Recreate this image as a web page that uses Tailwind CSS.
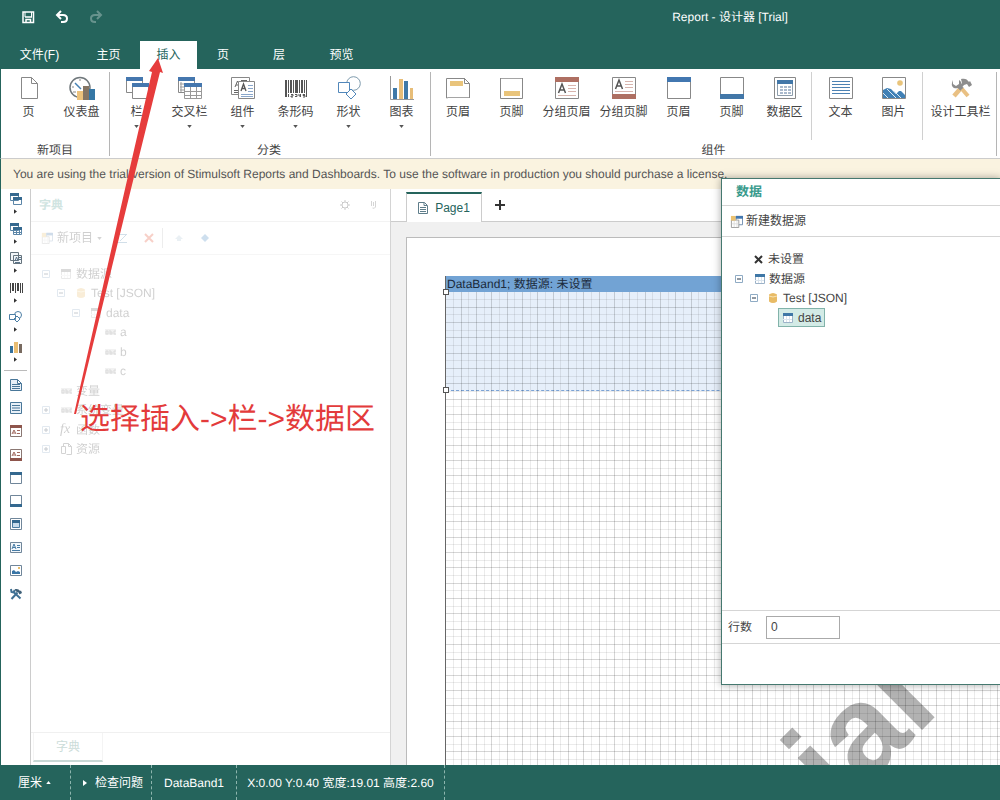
<!DOCTYPE html>
<html lang="zh-CN">
<head>
<meta charset="utf-8">
<title>Report - 设计器 [Trial]</title>
<script src="https://cdn.jsdelivr.net/npm/@tailwindcss/browser@4"></script>
</head>
<body class="font-['Liberation_Sans','Noto_Sans_CJK_SC',sans-serif] text-xs text-[#444] [text-rendering:geometricPrecision]">
<svg class="hidden" aria-hidden="true">
  <symbol id="page" viewBox="0 0 24 24"><path d="M4.500 1.500h10l6 6v15h-16zM14.500 1.500v6h6" fill="#fff" stroke="#888"/></symbol>
  <symbol id="gauge" viewBox="0 0 28 24"><circle cx="12" cy="11.500" r="10" fill="#fff" stroke="#70787c" stroke-width="1.500"/><path d="M7 7l6 6" stroke="#4682b4" stroke-width="1.500"/><path d="M9 15h6v9H9z" fill="#ecc27c"/><path d="M15 10h6v14h-6z" fill="#857564"/><path d="M21 13h6v11h-6z" fill="#3577a5"/><path d="M5 16h3M12 3v2M4 11h2" stroke="#888"/></symbol>
  <symbol id="bands" viewBox="0 0 24 24"><path d="M1.500 1.500h16v15h-16z" fill="#fff" stroke="#888"/><path d="M1 1h17v4H1z" fill="#4577ae"/><path d="M7.500 7.500h16v15h-16z" fill="#fff" stroke="#888"/><path d="M7 7h17v4H7z" fill="#4577ae"/></symbol>
  <symbol id="cross" viewBox="0 0 24 24"><path d="M.5 1.500h16v15H.5z" fill="#fff" stroke="#888"/><path d="M0 1h17v4H0z" fill="#4577ae"/><path d="M2 8h4M2 11h4M2 14h4M3 6v10" stroke="#999"/><path d="M6.500 7.500h17v15h-17z" fill="#fff" stroke="#999"/><path d="M6 7h18v4H6z" fill="#4577ae"/><path d="M12.500 11v11M18.500 11v11M6 15.500h17M6 19.500h17" fill="none" stroke="#999"/></symbol>
  <symbol id="comp" viewBox="0 0 24 24"><path d="M.5 1.500h18v17H.5z" fill="#fff" stroke="#888"/><path d="M4 11l2.500-6L8 8M5 9h3M10 4.500h6M3 14.500h4M3 16.500h4" fill="none" stroke="#666"/><path d="M7.500 5.500h16v17h-16z" fill="#fff" stroke="#888"/><path d="M10 15l2.500-7L15 15M11 12.500h3" fill="none" stroke="#555" stroke-width="1.300"/><path d="M17 9.500h5M17 12.500h5M17 15.500h5M10 18.500h12M10 20.500h12" stroke="#8aa7cb"/></symbol>
  <symbol id="barcode" viewBox="0 0 24 24"><path d="M1 4h2v17H1zM4 4h1v13H4zM6 4h2v13H6zM9 4h1v13H9zM11 4h3v13h-3zM15 4h1v13h-1zM17 4h2v13h-2zM20 4h1v13h-1zM22 4h1v17h-1z" fill="#555"/><path d="M4.500 18v3M7 18.500h2v1.500H7V21h2M11 18.500h2v2h-2M15 18v2h2M16.500 18v3M21 18.500h-2v1h2V21h-2" fill="none" stroke="#555"/></symbol>
  <symbol id="shapes" viewBox="0 0 24 24"><circle cx="16.500" cy="7.500" r="6.800" fill="#fff" stroke="#7d9aac"/><path d="M1.500 6.500h11v10h-11z" fill="#fff" stroke="#5187ba"/><path d="M14 13l5 5-5 5-5-5z" fill="#fff" stroke="#5187ba"/></symbol>
  <symbol id="chart" viewBox="0 0 24 24"><path d="M.5 0v23.500H24" fill="none" stroke="#999"/><path d="M3 12h4v11H3zM14 5h4v18h-4z" fill="#3f78a7"/><path d="M9 3h4v20H9zM20 12h3v11h-3z" fill="#e7bd78"/></symbol>
  <symbol id="phead" viewBox="0 0 24 24"><path d="M.5 22V2.500h18l5 5V22l-1-1-1 1-1-1-1 1-1-1-1 1-1-1-1 1-1-1-1 1-1-1-1 1-1-1-1 1-1-1-1 1-1-1-1 1-1-1-1 1-1-1-1 1zM18.500 2v5.500h5" fill="#fff" stroke="#888"/><path d="M4 5h13v5H4z" fill="#e9c47b"/></symbol>
  <symbol id="pfoot" viewBox="0 0 24 24"><path d="M.5 2l1 1 1-1 1 1 1-1 1 1 1-1 1 1 1-1 1 1 1-1 1 1 1-1 1 1 1-1 1 1 1-1 1 1 1-1 1 1 1-1 1 1 1-1v20.500H.5z" fill="#fff" stroke="#888"/><path d="M4 15h16v5H4z" fill="#e9c47b"/></symbol>
  <symbol id="ghead" viewBox="0 0 24 24"><path d="M.5 1.500h23v21H.5z" fill="#fff" stroke="#888"/><path d="M0 1h24v5H0z" fill="#ae6f62"/><path d="M3.500 17l3.500-9 3.500 9M5 14h4" fill="none" stroke="#555" stroke-width="1.500"/><path d="M13 9.500h8M13 12.500h8M13 15.500h8M3 19.500h18" stroke="#d8b5ae"/></symbol>
  <symbol id="gfoot" viewBox="0 0 24 24"><path d="M.5 1.500h23v21H.5z" fill="#fff" stroke="#888"/><path d="M0 18h24v5H0z" fill="#ae6f62"/><path d="M3.500 13L7 4l3.500 9M5 10h4" fill="none" stroke="#555" stroke-width="1.500"/><path d="M13 5.500h8M13 8.500h8M13 11.500h8M3 15.500h18" stroke="#d8b5ae"/></symbol>
  <symbol id="head" viewBox="0 0 24 24"><path d="M.5 1.500h23v21H.5z" fill="#fff" stroke="#888"/><path d="M0 1h24v5H0z" fill="#4277b0"/></symbol>
  <symbol id="foot" viewBox="0 0 24 24"><path d="M.5 1.500h23v21H.5z" fill="#fff" stroke="#888"/><path d="M0 18h24v5H0z" fill="#4277a8"/></symbol>
  <symbol id="data" viewBox="0 0 24 24"><path d="M1.500 1.500h21v21h-21z" fill="#fff" stroke="#888"/><path d="M4.500 4.500h15v15h-15z" fill="#fff" stroke="#8d9dab"/><path d="M4 4h16v4H4z" fill="#4277a8"/><path d="M7 11h3M11 11h3M15 11h3M7 14h3M11 14h3M15 14h3M7 17h3M11 17h3M15 17h3" stroke="#8fa4bd" stroke-width="1.500"/></symbol>
  <symbol id="text" viewBox="0 0 24 24"><path d="M.5 1.500h23v21H.5z" fill="#fff" stroke="#888"/><path d="M3 5.500h18M3 8.500h18M3 11.500h18M3 14.500h18M3 17.500h18" stroke="#4d82b3"/></symbol>
  <symbol id="image" viewBox="0 0 24 24"><path d="M.5 1.500h23v21H.5z" fill="#fff" stroke="#888"/><circle cx="18" cy="7" r="2.800" fill="#e9c47b"/><path d="M1 14l4-2 4 1 5 5 3-3h2l4 4v3H1z" fill="#4080b5"/><path d="M5 13l9 9M12 15l7 7M1 17l5 5" stroke="#dceaf5"/></symbol>
  <symbol id="tools" viewBox="0 0 24 24"><path d="M12 12l-7 8" stroke="#e9c083" stroke-width="4.500"/><path d="M4 4v4l3 2 3-2V4c2 1 3 3 2 6l3 2-3 3-3-3c-4 1-7-1-6-5z" fill="#8d8d8d"/><path d="M12 3c4-1 6 0 8 3l1-1 2 4-3 2-2-3-3 1-4 5-2-2 4-5z" fill="#8d8d8d"/><path d="M13 13l6 7" stroke="#e9c083" stroke-width="4"/></symbol>
  <symbol id="tools2" viewBox="0 0 24 24"><path d="M21 21L6 7M2 2l1 6 5 1 1-5M3 22L15 9" fill="none" stroke="#3f7094" stroke-width="4"/><path d="M9 3c5-2 9 0 11 3l2-1 2 5-5 3-2-4-5-2z" fill="#3f6078"/></symbol>
  <symbol id="table" viewBox="0 0 12 12"><path d="M1.500 1.500h9v9h-9z" fill="#fff" stroke="#9cb2c8"/><path d="M4.500 4v6M7.500 4v6M1 7.500h9" stroke="#dbe5ee"/><path d="M1 1h10v3H1z" fill="#3f77a6"/></symbol>
  <symbol id="db" viewBox="0 0 12 12"><path d="M2 2.500q4-3 8 0v7q-4 3-8 0z" fill="#e8bb66"/><path d="M2 4q4 2 8 0" fill="none" stroke="#f9e3b4"/></symbol>
  <symbol id="minus" viewBox="0 0 8 8"><path d="M.5.5h7v7h-7z" fill="#fff" stroke="#8fabc4"/><path d="M2 4h4" stroke="#234"/></symbol>
  <symbol id="plus" viewBox="0 0 8 8"><path d="M.5.5h7v7h-7z" fill="#fff" stroke="#8fabc4"/><path d="M2 4h4M4 2v4" stroke="#234"/></symbol>
  <symbol id="abc" viewBox="0 0 13 12"><path d="M1 3h11v6H1z" fill="#ccc"/><path d="M2 8V5h2v3H2M6 4v4h2V6H6M12 5h-2v3h2" fill="none" stroke="#777"/></symbol>
  <symbol id="newds" viewBox="0 0 14 14"><path d="M6.500 1.500h7v9h-7z" fill="#fff" stroke="#6d8db0"/><path d="M6 1h8v3H6z" fill="#4277b0"/><path d="M1.500 5.500h8v8h-8z" fill="#fff" stroke="#999"/><path d="M4.500 6v7M7.500 6v7M2 9.500h7" stroke="#ddd"/><path d="M1 1h5v5H1z" fill="#ebc16f"/></symbol>
  <symbol id="down" viewBox="0 0 6 4"><path d="M0 0h6L3 4z" fill="#555"/></symbol>
  <symbol id="right" viewBox="0 0 4 6"><path d="M0 0v6l4-3z" fill="#333"/></symbol>
</svg>

<div class="relative flex h-screen flex-col overflow-hidden bg-white">
  <header class="shrink-0 bg-[#25645c] text-white">
    <div class="flex h-[34px] items-center">
      <div class="flex w-[46%] items-center gap-5 pl-[21px]">
        <button aria-label="保存"><svg class="size-[14px]" viewBox="0 0 14 14"><path d="M2 2h10.500v10.500H2zM4 7h7M5 12V9.500h4.500V12" fill="none" stroke="#fff" stroke-width="1.500"/><path d="M4 2v5M10.500 2v5" stroke="#fff"/></svg></button>
        <button aria-label="撤销"><svg class="size-[14px]" viewBox="0 0 14 14"><path d="M6 1L2 5l4 4M2 5h6q4 0 4 3.500T8 12H6" fill="none" stroke="#fff" stroke-width="2"/></svg></button>
        <button aria-label="重做" class="opacity-30"><svg class="size-[14px]" viewBox="0 0 14 14"><path d="M8 1l4 4-4 4M12 5H6q-4 0-4 3.500T6 12h1" fill="none" stroke="#fff" stroke-width="2"/></svg></button>
      </div>
      <h1 class="flex-1 text-center">Report - 设计器 [Trial]</h1>
    </div>
    <nav class="flex h-[35px] items-end pl-[11px]">
      <button class="h-7 w-[57px]">文件(F)</button>
      <button class="ml-3 h-7 w-[57px]">主页</button>
      <button class="ml-[3px] h-7 w-[57px] bg-white text-[#25645c]">插入</button>
      <button class="h-7 w-[52px]">页</button>
      <button class="ml-1 h-7 w-[52px]">层</button>
      <button class="ml-2 h-7 w-[57px]">预览</button>
    </nav>
  </header>

  <section aria-label="插入" class="flex h-[90px] shrink-0 border-b border-l border-b-[#ccc] border-l-[#25645c] pt-[3px] pb-[2px] pl-px">
    <div class="flex shrink-0 flex-col justify-between border-r border-[#b5b5b5] pr-px">
      <div class="flex">
        <button class="flex w-[53px] flex-col items-center pt-1"><svg class="size-6"><use href="#page"/></svg><span class="mt-1">页</span></button>
        <button class="flex w-[53px] flex-col items-center pt-1"><svg class="h-6 w-7"><use href="#gauge"/></svg><span class="mt-1">仪表盘</span></button>
      </div>
      <div class="text-center leading-3">新项目</div>
    </div>
    <div class="flex shrink-0 flex-col justify-between border-r border-[#b5b5b5] pr-[2px]">
      <div class="flex">
        <button class="flex w-[53px] flex-col items-center pt-1"><svg class="size-6"><use href="#bands"/></svg><span class="mt-1">栏</span><svg class="mt-[5px] h-[3px] w-[5px]"><use href="#down"/></svg></button>
        <button class="flex w-[53px] flex-col items-center pt-1"><svg class="size-6"><use href="#cross"/></svg><span class="mt-1">交叉栏</span><svg class="mt-[5px] h-[3px] w-[5px]"><use href="#down"/></svg></button>
        <button class="flex w-[53px] flex-col items-center pt-1"><svg class="size-6"><use href="#comp"/></svg><span class="mt-1">组件</span><svg class="mt-[5px] h-[3px] w-[5px]"><use href="#down"/></svg></button>
        <button class="flex w-[53px] flex-col items-center pt-1"><svg class="size-6"><use href="#barcode"/></svg><span class="mt-1">条形码</span><svg class="mt-[5px] h-[3px] w-[5px]"><use href="#down"/></svg></button>
        <button class="flex w-[53px] flex-col items-center pt-1"><svg class="size-6"><use href="#shapes"/></svg><span class="mt-1">形状</span><svg class="mt-[5px] h-[3px] w-[5px]"><use href="#down"/></svg></button>
        <button class="flex w-[53px] flex-col items-center pt-1"><svg class="size-6"><use href="#chart"/></svg><span class="mt-1">图表</span><svg class="mt-[5px] h-[3px] w-[5px]"><use href="#down"/></svg></button>
      </div>
      <div class="text-center leading-3">分类</div>
    </div>
    <div class="flex shrink-0 flex-col justify-between border-r border-[#b5b5b5]">
      <div class="flex">
        <button class="flex w-[54px] flex-col items-center pt-1"><svg class="size-6"><use href="#phead"/></svg><span class="mt-1">页眉</span></button>
        <button class="flex w-[53px] flex-col items-center pt-1"><svg class="size-6"><use href="#pfoot"/></svg><span class="mt-1">页脚</span></button>
        <button class="flex w-[57px] flex-col items-center pt-1"><svg class="size-6"><use href="#ghead"/></svg><span class="mt-1">分组页眉</span></button>
        <button class="flex w-[57px] flex-col items-center pt-1"><svg class="size-6"><use href="#gfoot"/></svg><span class="mt-1">分组页脚</span></button>
        <button class="flex w-[53px] flex-col items-center pt-1"><svg class="size-6"><use href="#head"/></svg><span class="mt-1">页眉</span></button>
        <button class="flex w-[53px] flex-col items-center pt-1"><svg class="size-6"><use href="#foot"/></svg><span class="mt-1">页脚</span></button>
        <button class="flex w-[53px] flex-col items-center pt-1"><svg class="size-6"><use href="#data"/></svg><span class="mt-1">数据区</span></button>
        <div class="mr-[2px] h-[68px] border-l border-[#d0d0d0]"></div>
        <button class="flex w-[53px] flex-col items-center pt-1"><svg class="size-6"><use href="#text"/></svg><span class="mt-1">文本</span></button>
        <button class="flex w-[53px] flex-col items-center pt-1"><svg class="size-6"><use href="#image"/></svg><span class="mt-1">图片</span></button>
        <div class="mx-[2px] h-[68px] border-l border-[#d0d0d0]"></div>
        <button class="flex w-[71px] flex-col items-center pt-1"><svg class="size-6"><use href="#tools"/></svg><span class="mt-1">设计工具栏</span></button>
      </div>
      <div class="text-center leading-3">组件</div>
    </div>
  </section>

  <p class="flex h-[30px] shrink-0 items-center border-l border-l-[#25645c] bg-[#faf3e0] pl-3 text-[#555]">You are using the trial version of Stimulsoft Reports and Dashboards. To use the software in production you should purchase a license.</p>

  <main class="flex min-h-0 flex-1 border-l border-[#25645c]">
    <aside aria-label="工具箱" class="w-[30px] shrink-0 border-r border-[#ccc] pt-1">
      <div class="flex h-[177px] flex-col">
        <button aria-label="栏" class="flex flex-1 flex-col items-center gap-1"><svg class="size-3" viewBox="0 0 12 12"><path d="M.5.500h8v7h-8zM3.500 4.500h8v7h-8z" fill="#fff" stroke="#5c86a8"/><path d="M0 0h9v3H0zM3 4h9v3H3z" fill="#34688f"/></svg><svg class="h-[5px] w-[3px]"><use href="#right"/></svg></button>
        <button aria-label="交叉栏" class="flex flex-1 flex-col items-center gap-1"><svg class="size-3" viewBox="0 0 12 12"><path d="M.5.500h8v7h-8zM3.500 4.500h8v7h-8zM6.500 7v4M9.500 7v4M4 9.500h7" fill="#fff" stroke="#5c86a8"/><path d="M0 0h9v3H0zM3 4h9v3H3z" fill="#34688f"/></svg><svg class="h-[5px] w-[3px]"><use href="#right"/></svg></button>
        <button aria-label="组件" class="flex flex-1 flex-col items-center gap-1"><svg class="size-3" viewBox="0 0 12 12"><path d="M.5.500h8v8h-8zM3.500 3.500h8v8h-8z" fill="#f2f6f9" stroke="#66747e"/><path d="M5 9l1.500-4L8 9M9 5.500h2M9 7.500h2M5 10.500h5" fill="none" stroke="#5a7389"/></svg><svg class="h-[5px] w-[3px]"><use href="#right"/></svg></button>
        <button aria-label="条形码" class="flex flex-1 flex-col items-center gap-1"><svg class="h-3 w-[14px]" viewBox="0 0 14 12"><path d="M1 1h1v10H1zM3 1h2v8H3zM6 1h1v10H6zM8 1h2v8H8zM11 1h1v10h-1zM13 1h1v10h-1z" fill="#444"/></svg><svg class="h-[5px] w-[3px]"><use href="#right"/></svg></button>
        <button aria-label="形状" class="flex flex-1 flex-col items-center gap-1"><svg class="h-3 w-[13px]" viewBox="0 0 13 12"><circle cx="9" cy="4" r="3.500" fill="#fff" stroke="#4c7ea5"/><path d="M.5 3.500h6v5h-6zM8 5l3 3-3 3-3-3z" fill="#fff" stroke="#4c7ea5"/></svg><svg class="h-[5px] w-[3px]"><use href="#right"/></svg></button>
        <button aria-label="图表" class="flex flex-1 flex-col items-center gap-1"><svg class="size-3" viewBox="0 0 12 12"><path d="M0 5h3v7H0z" fill="#33709d"/><path d="M4 1h4v11H4z" fill="#e9bd72"/><path d="M9 3h3v9H9z" fill="#786a60"/></svg><svg class="h-[5px] w-[3px]"><use href="#right"/></svg></button>
      </div>
      <div class="mx-[3px] border-t border-[#bbb]"></div>
      <div class="mt-[2px] flex h-[233px] flex-col">
        <button aria-label="文档" class="flex flex-1 items-center justify-center"><svg class="size-3" viewBox="0 0 12 12"><path d="M.5.500h7l4 4v7H.5zM2 5.500h8M2 7.500h8M2 9.500h8M7.500.5v4h4" fill="#e8f0f8" stroke="#497799"/></svg></button>
        <button aria-label="文本" class="flex flex-1 items-center justify-center"><svg class="size-3" viewBox="0 0 12 12"><path d="M.5.500h11v11H.5zM2 3.500h8M2 6h8M2 8.500h8" fill="#e8f0f8" stroke="#497799"/></svg></button>
        <button aria-label="分组页眉" class="flex flex-1 items-center justify-center"><svg class="size-3" viewBox="0 0 12 12"><path d="M.5.500h11v11H.5z" fill="#fff" stroke="#8a7772"/><path d="M0 0h12v3H0z" fill="#8e554c"/><path d="M2 9l2-4 2 4M3 8h2M7 5.500h3M7 8.500h3" fill="none" stroke="#a1695e"/></svg></button>
        <button aria-label="分组页脚" class="flex flex-1 items-center justify-center"><svg class="size-3" viewBox="0 0 12 12"><path d="M.5.500h11v11H.5z" fill="#fff" stroke="#8a7772"/><path d="M0 9h12v3H0z" fill="#8e554c"/><path d="M2 7l2-4 2 4M3 6h2M7 3.500h3M7 6.500h3" fill="none" stroke="#a1695e"/></svg></button>
        <button aria-label="页眉" class="flex flex-1 items-center justify-center"><svg class="size-3" viewBox="0 0 12 12"><path d="M.5.500h11v11H.5z" fill="#fff" stroke="#70869a"/><path d="M0 0h12v3H0z" fill="#34688f"/></svg></button>
        <button aria-label="页脚" class="flex flex-1 items-center justify-center"><svg class="size-3" viewBox="0 0 12 12"><path d="M.5.500h11v11H.5z" fill="#fff" stroke="#70869a"/><path d="M0 9h12v3H0z" fill="#34688f"/></svg></button>
        <button aria-label="数据区" class="flex flex-1 items-center justify-center"><svg class="size-3" viewBox="0 0 12 12"><path d="M.5.500h11v11H.5z" fill="#fff" stroke="#70869a"/><path d="M2.500 3.500h7v6h-7z" fill="#c9dcec" stroke="#4b7da3"/><path d="M2 2h8v3H2z" fill="#34688f"/></svg></button>
        <button aria-label="富文本" class="flex flex-1 items-center justify-center"><svg class="size-3" viewBox="0 0 12 12"><path d="M.5.500h11v10H.5z" fill="#f2f7fb" stroke="#70869a"/><path d="M2 7l2-5 2 5M3 5.500h2M7 3.500h3M7 5.500h3M2 8.500h8" fill="none" stroke="#467ba5"/></svg></button>
        <button aria-label="图片" class="flex flex-1 items-center justify-center"><svg class="size-3" viewBox="0 0 12 12"><path d="M.5.500h11v10H.5z" fill="#fff" stroke="#70869a"/><path d="M2 9V6l2-1 2 2 2-1 2 1v2z" fill="#3875a6"/><path d="M8 2h2v2H8z" fill="#e7bb69"/></svg></button>
        <button aria-label="设计工具栏" class="flex flex-1 items-center justify-center"><svg class="size-3"><use href="#tools2"/></svg></button>
      </div>
    </aside>

    <section aria-label="字典" class="flex w-[360px] shrink-0 flex-col border-r border-[#d4d4d4]">
      <div class="flex h-[33px] items-center gap-[18px] border-b border-[#f3f3f3] pr-3 pl-2">
        <h2 class="flex-1 font-bold text-[#d0e4e1]">字典</h2>
        <button aria-label="设置"><svg class="size-[10px]" viewBox="0 0 10 10"><circle cx="5" cy="5" r="3" fill="none" stroke="#ccc"/><path d="M5 0v2M5 8v2M0 5h2M8 5h2M1.500 1.500l1.500 1.500M7 7l1.500 1.500M8.500 1.500L7 3M3 7L1.500 8.500" stroke="#ccc"/></svg></button>
        <button aria-label="固定"><svg class="size-[10px]" viewBox="0 0 10 10"><path d="M3.500 1v5M5.500 2v4M7.500 1v6q-1 2-3 1" fill="none" stroke="#d5d5d5"/></svg></button>
      </div>
      <div class="flex h-[33px] items-center border-b border-[#ddd] pl-[10px] opacity-25">
        <button class="flex items-center gap-1"><svg class="size-3"><use href="#newds"/></svg>新项目<svg class="h-[3px] w-[5px]"><use href="#down"/></svg></button>
        <button aria-label="编辑" class="ml-[15px]"><svg class="size-[11px]" viewBox="0 0 11 11"><path d="M1 1.500h9M1 9.500h9M3 8l6-6" fill="none" stroke="#4f84aa"/></svg></button>
        <button aria-label="删除" class="ml-4"><svg class="size-[10px]" viewBox="0 0 10 10"><path d="M1 1l8 8M9 1L1 9" stroke="#e24727" stroke-width="2"/></svg></button>
        <div class="ml-2 h-5 border-l border-[#bbb]"></div>
        <button aria-label="上移" class="ml-3"><svg class="size-2" viewBox="0 0 8 8"><path d="M4 1l4 4H6v2H2V5H0z" fill="#aec4d4"/></svg></button>
        <button aria-label="下移" class="ml-[18px]"><svg class="size-2" viewBox="0 0 8 8"><path d="M4 8l4-4-4-4-4 4z" fill="#3f82bf"/></svg></button>
      </div>
      <ul class="mt-[9px] flex h-[195px] flex-col pl-[11px] opacity-25">
        <li class="flex flex-1 items-center gap-1"><svg class="mr-[6px] size-2"><use href="#minus"/></svg><svg class="size-3 grayscale"><use href="#table"/></svg>数据源</li>
        <li class="ml-[15px] flex flex-1 items-center gap-1"><svg class="mr-[6px] size-2"><use href="#minus"/></svg><svg class="size-3"><use href="#db"/></svg>Test [JSON]</li>
        <li class="ml-[30px] flex flex-1 items-center gap-1"><svg class="mr-[6px] size-2"><use href="#minus"/></svg><svg class="size-3 grayscale"><use href="#table"/></svg>data</li>
        <li class="ml-[62px] flex flex-1 items-center gap-[3px]"><svg class="h-3 w-[13px]"><use href="#abc"/></svg>a</li>
        <li class="ml-[62px] flex flex-1 items-center gap-[3px]"><svg class="h-3 w-[13px]"><use href="#abc"/></svg>b</li>
        <li class="ml-[62px] flex flex-1 items-center gap-[3px]"><svg class="h-3 w-[13px]"><use href="#abc"/></svg>c</li>
        <li class="ml-[18px] flex flex-1 items-center gap-[3px]"><svg class="h-3 w-[13px]"><use href="#abc"/></svg>变量</li>
        <li class="flex flex-1 items-center gap-[3px]"><svg class="mr-[7px] size-2"><use href="#plus"/></svg><svg class="h-3 w-[13px]"><use href="#abc"/></svg>系统变量</li>
        <li class="flex flex-1 items-center gap-[3px]"><svg class="mr-[7px] size-2"><use href="#plus"/></svg><i class="w-[13px] font-['Liberation_Serif',serif] text-sm leading-none">fx</i>函数</li>
        <li class="flex flex-1 items-center gap-[3px]"><svg class="mr-[7px] size-2"><use href="#plus"/></svg><svg class="h-3 w-[13px]" viewBox="0 0 13 12"><path d="M3.500 3V.500h5l3 3v8h-5M1.500 3.500h4v7h-4zM8.500.500v3h3" fill="none" stroke="#555"/></svg>资源</li>
      </ul>
      <div class="mt-auto border-t border-[#f0f0f0] pl-[2px]">
        <button class="mb-[3px] h-[29px] w-[70px] border-x border-b-2 border-x-[#f4f4f4] border-b-[#c7d8d5] text-[#cbdcd9]">字典</button>
      </div>
    </section>

    <section aria-label="报表页面" class="flex min-w-0 flex-1 flex-col bg-[#f0f0f0]">
      <div class="flex h-[33px] shrink-0 items-end border-b border-[#ccc] bg-white pl-[15px]">
        <button class="-mb-px flex h-[30px] w-[76px] items-center justify-center gap-[7px] border-x border-t-2 border-x-[#ccc] border-t-[#25645c] bg-white text-[#25645c]"><svg class="h-3 w-[10px]" viewBox="0 0 10 12"><path d="M.5.500h6l3 3v8h-9zM6 .5v3h3M2 5.500h6M2 7.500h6M2 9.500h6" fill="none" stroke="#5e7d8a"/></svg>Page1</button>
        <button aria-label="添加页面" class="mb-[10px] ml-3"><svg class="size-3" viewBox="0 0 12 12"><path d="M6 1v10M1 6h10" stroke="#333" stroke-width="2"/></svg></button>
      </div>
      <div class="mt-[15px] ml-[15px] min-h-0 flex-1 overflow-hidden border-t border-l border-[#bbb] bg-white pt-[38px] pl-[38px]">
        <div class="relative h-full border-l border-[#666]">
          <div class="h-4 bg-[#72a3d4] pl-px leading-4 text-[#1c2b3c]">DataBand1; 数据源: 未设置</div>
          <div class="h-[99px] border-b border-dashed border-[#7ba2d4] bg-[#e6effa]"></div>
          <svg class="absolute inset-x-0 top-4 bottom-0 size-full" aria-hidden="true">
            <defs><pattern id="grid" width="46" height="46" patternUnits="userSpaceOnUse">
              <path d="M7.500 0v46M22.500 0v46M38.500 0v46M0 7.500h46M0 22.500h46M0 38.500h46" stroke="#000" stroke-opacity=".08"/>
              <path d="M15.500 0v46M30.500 0v46M45.500 0v46M0 15.500h46M0 30.500h46M0 45.500h46" stroke="#000" stroke-opacity=".16"/>
            </pattern></defs>
            <rect width="100%" height="100%" fill="url(#grid)"/>
            <text transform="translate(495 419) rotate(-45)" text-anchor="end" font-family="Liberation Sans, sans-serif" font-weight="700" font-size="129" fill="#000" fill-opacity=".3">Trial</text>
          </svg>
          <span class="absolute top-[13px] -left-[3px] size-[6px] border border-[#555] bg-white"></span>
          <span class="absolute top-[111px] -left-[3px] size-[6px] border border-[#555] bg-white"></span>
        </div>
      </div>
    </section>
  </main>

  <footer class="flex h-[35px] shrink-0 items-stretch bg-[#25645c] text-white">
    <button class="flex w-[71px] items-center gap-1 border-r border-dashed border-[#8db5ae] pl-[18px]">厘米<svg class="h-[3px] w-[5px]" viewBox="0 0 6 4"><path d="M0 4h6L3 0z" fill="#fff"/></svg></button>
    <button class="flex w-[81px] items-center gap-2 border-r border-dashed border-[#8db5ae] pl-3"><svg class="h-[6px] w-1" viewBox="0 0 4 6"><path d="M0 0v6l4-3z" fill="#fff"/></svg>检查问题</button>
    <div class="flex w-[85px] items-center justify-center border-r border-dashed border-[#8db5ae]">DataBand1</div>
    <div class="flex w-[208px] items-center justify-center border-r border-dashed border-[#8db5ae]">X:0.00 Y:0.40 宽度:19.01 高度:2.60</div>
  </footer>

  <section role="dialog" aria-label="数据" class="absolute top-[178px] -right-px left-[721px] flex h-[507px] flex-col border border-[#45786f] bg-white shadow-[0_0_8px_rgba(0,0,0,0.35)]">
    <h2 class="flex h-[27px] items-center border-b border-[#d5d5d5] pl-[14px] text-[13px] font-bold text-[#389a8c]">数据</h2>
    <div class="flex h-[31px] items-center border-b border-[#d5d5d5] pl-2">
      <button class="flex items-center gap-[3px]"><svg class="size-[13px]"><use href="#newds"/></svg>新建数据源</button>
    </div>
    <ul class="mt-3 flex flex-1 flex-col pl-[13px]">
      <li class="flex h-5 items-center gap-[5px] pl-[19px]"><svg class="size-[9px]" viewBox="0 0 9 9"><path d="M1 1l7 7M8 1L1 8" stroke="#333" stroke-width="2"/></svg>未设置</li>
      <li class="flex h-[19px] items-center gap-[3px]"><svg class="mr-2 size-2"><use href="#minus"/></svg><svg class="size-3"><use href="#table"/></svg>数据源</li>
      <li class="flex h-5 items-center gap-1 pl-[15px]"><svg class="mr-[5px] size-2"><use href="#minus"/></svg><svg class="size-3"><use href="#db"/></svg>Test [JSON]</li>
      <li class="flex h-[19px] items-center pl-[43px]"><button class="flex h-[19px] items-center gap-1 border border-[#82b3aa] bg-[#d3ebe6] px-[3px]"><svg class="size-3"><use href="#table"/></svg>data</button></li>
    </ul>
    <div class="flex h-[34px] items-center gap-[14px] border-y border-[#d5d5d5] pl-[6px]">
      <label for="rows">行数</label>
      <input id="rows" value="0" class="h-[23px] w-[74px] border border-[#aaa] px-1">
    </div>
    <div class="h-10"></div>
  </section>

  <svg class="pointer-events-none absolute top-0 left-0 h-[430px] w-[200px]" aria-hidden="true"><path d="M74 414L125 189 152 72l-3-1 9-13 5 15-3-1L131 189 76 414z" fill="#e63c3c"/></svg>
  <p class="pointer-events-none absolute top-[398px] left-20 text-[30px] leading-[44px] whitespace-nowrap text-[#e33b3b]">选择插入-&gt;栏-&gt;数据区</p>
</div>
</body>
</html>
